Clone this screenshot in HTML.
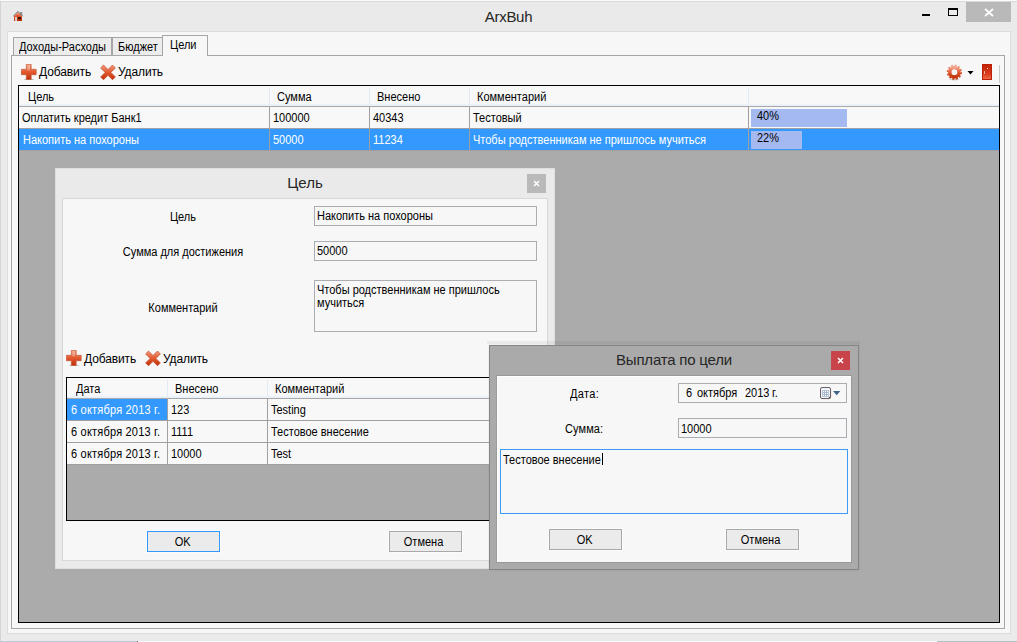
<!DOCTYPE html>
<html lang="ru">
<head>
<meta charset="utf-8">
<title>ArxBuh</title>
<style>
*{box-sizing:border-box;margin:0;padding:0}
html,body{width:1017px;height:642px;overflow:hidden;background:#eaeaea}
body{position:relative;font-family:"Liberation Sans",sans-serif;font-size:12px;color:#000;line-height:14px}
.s{transform:scaleX(.9167);transform-origin:0 50%}
.sc{transform-origin:50% 50%}
.a{position:absolute;white-space:nowrap}
.t12{letter-spacing:-.12px}
.w{color:#fff}
.hl{background:#3399ff}
.vl{position:absolute;width:1px;background:#a0a0a0}
.hlne{position:absolute;height:1px;background:#a0a0a0}
.inp{position:absolute;border:1px solid #abadb3;background:#f7f7f7}
.btn{position:absolute;border:1px solid #a9a9a9;background:#ebebeb;text-align:center;font-size:12px;line-height:19px;padding-top:1px;box-shadow:0 0 0 1px #fbfbfb}
.btn span{display:inline-block;position:relative;left:-1px;transform:scaleX(.9167)}
.btn span.c{left:-2px}
</style>
</head>
<body>
<!-- ===== main window frame ===== -->
<div class="a" id="frame" style="left:0;top:0;width:1017px;height:642px;background:#eaeaea"></div>
<div class="a" style="left:0;top:0;width:1017px;height:1px;background:#fafafa"></div>
<div class="a" style="left:0;top:1px;width:1017px;height:1px;background:#dadada"></div>
<div class="a" style="left:0;top:1px;width:1px;height:640px;background:#d4d4d4"></div>
<div class="a" style="left:0;top:641px;width:137px;height:1px;background:#b9c9d6"></div>
<div class="a" style="left:137px;top:641px;width:800px;height:1px;background:#fbfbfb"></div>
<div class="a" style="left:137px;top:641px;width:1px;height:1px;background:#666"></div>
<div class="a" style="left:937px;top:641px;width:80px;height:1px;background:#b4c0c8"></div>

<!-- app icon -->
<svg class="a" style="left:12px;top:10px" width="12" height="12" viewBox="0 0 12 12">
<defs><linearGradient id="gh" x1="0" y1="0" x2="0" y2="1"><stop offset="0" stop-color="#f6a288"/><stop offset="0.45" stop-color="#e4582e"/><stop offset="1" stop-color="#c8380e"/></linearGradient></defs>
<rect x="8.2" y="2" width="2" height="3" fill="#8a8a8a"/>
<path d="M6 2 L10 6 L10 11 L2 11 L2 6 Z" fill="url(#gh)"/>
<path d="M1.2 6.2 L6 1.4 L10.8 6.2" fill="none" stroke="#687078" stroke-width="1"/>
<rect x="3.2" y="7" width="1.6" height="4" fill="#d8ecf2"/>
<rect x="5.8" y="7" width="3.4" height="2.2" fill="#3a160c"/>
<rect x="5.6" y="9.2" width="3.8" height="1.8" fill="#b02a0a"/>
</svg>
<div class="a" id="title" style="left:0;top:8px;width:1017px;text-align:center;font-size:15px;line-height:18px;color:#262626;letter-spacing:-.3px">ArxBuh</div>

<!-- caption buttons -->
<div class="a" style="left:922px;top:14px;width:8px;height:2px;background:#000"></div>
<div class="a" style="left:948px;top:8px;width:10px;height:8px;border:1px solid #000;border-top-width:2px"></div>
<div class="a" style="left:966px;top:2px;width:45px;height:20px;background:#b9b9b9"></div>
<svg class="a" style="left:984px;top:8px" width="10" height="9" viewBox="0 0 10 9"><path d="M1 1 L9 8 M9 1 L1 8" stroke="#fff" stroke-width="1.7" fill="none"/></svg>

<!-- client area -->
<div class="a" id="client" style="left:7px;top:31px;width:1004px;height:603px;background:#f7f7f7;border:1px solid #dcdcdc"></div>

<!-- tab page -->
<div class="a" id="page" style="left:11px;top:55px;width:994px;height:574px;background:#f7f7f7;border:1px solid #a6a6a6"></div>
<!-- tabs -->
<div class="a" style="left:13px;top:37px;width:99px;height:19px;background:#ececec;border:1px solid #a6a6a6"></div>
<div class="a" style="left:112px;top:37px;width:51px;height:19px;background:#ececec;border:1px solid #a6a6a6"></div>
<div class="a" style="left:162px;top:35px;width:46px;height:21px;background:#f7f7f7;border:1px solid #a6a6a6;border-bottom:none"></div>
<div class="a s" id="tab1" style="left:19px;top:40px">Доходы-Расходы</div>
<div class="a s" id="tab2" style="left:118px;top:40px">Бюджет</div>
<div class="a s" id="tab3" style="left:170px;top:38px">Цели</div>

<!-- toolbar -->
<svg class="a" style="left:21px;top:64px" width="16" height="16" viewBox="0 0 16 16">
<defs><linearGradient id="gp" x1="0" y1="0" x2="0" y2="1"><stop offset="0" stop-color="#f39a7c"/><stop offset="0.5" stop-color="#e25a30"/><stop offset="1" stop-color="#c22e06"/></linearGradient></defs>
<ellipse cx="8" cy="15.6" rx="5" ry="0.9" fill="#555" opacity=".35"/><path d="M5.3 0.3 H10.2 V5.3 H15.2 V10.7 H10.2 V15.4 H5.3 V10.7 H0.3 V5.3 H5.3 Z" fill="url(#gp)" stroke="#c2522e" stroke-width=".6"/><path d="M6.4 1.2 H9 V6.3 H6.4 Z" fill="#fff" opacity=".3"/>
</svg>
<div class="a t12" id="add1" style="left:39px;top:65px">Добавить</div>
<svg class="a" style="left:100px;top:64px" width="16" height="16" viewBox="0 0 16 16">
<path d="M3.5 1 L8 5.5 L12.5 1 L15.4 3.9 L10.9 8.4 L15.4 12.9 L12.5 15.8 L8 11.3 L3.5 15.8 L0.6 12.9 L5.1 8.4 L0.6 3.9 Z" fill="url(#gp)" stroke="#b8401c" stroke-width=".6"/>
</svg>
<div class="a t12" id="del1" style="left:118px;top:65px">Удалить</div>

<!-- gear -->
<svg class="a" style="left:946px;top:64px" width="17" height="17" viewBox="0 0 17 17">
<defs><linearGradient id="gg" x1="0" y1="0" x2="0" y2="1"><stop offset="0" stop-color="#f2a48a"/><stop offset="0.5" stop-color="#df5a34"/><stop offset="1" stop-color="#c2380e"/></linearGradient></defs>
<ellipse cx="8.4" cy="15.6" rx="5" ry="0.8" fill="#555" opacity=".25"/>
<circle cx="8.4" cy="8.2" r="4.6" fill="none" stroke="url(#gg)" stroke-width="3.4"/>
<circle cx="8.4" cy="8.2" r="6.7" fill="none" stroke="url(#gg)" stroke-width="1.9" stroke-dasharray="2 1.508"/>
</svg>
<svg class="a" style="left:967px;top:71px" width="7" height="4" viewBox="0 0 7 4"><path d="M0.5 0 H6.5 L3.5 3.5 Z" fill="#000"/></svg>
<div class="a" style="left:982px;top:64px;width:10px;height:16px;background:linear-gradient(#c82408,#d83818 60%,#ee6848);border:1px solid #b82008"></div>
<div class="a" style="left:987px;top:68px;width:1px;height:1px;background:#fff"></div>
<div class="a" style="left:984px;top:71px;width:1px;height:3px;background:#f4b0a0"></div>
<div class="a" style="left:999px;top:65px;width:1px;height:18px;background:#c8c8c8"></div>

<!-- main grid -->
<div class="a" id="grid" style="left:18px;top:85px;width:982px;height:538px;background:#ababab;border:1px solid #000"></div>
<div class="a" style="left:19px;top:86px;width:980px;height:20px;background:linear-gradient(#f8f8f8 0,#f8f8f8 17px,#f1f5fb 18px,#e6eefa 20px)"></div>
<div class="hlne" style="left:19px;top:106px;width:980px;background:#a8a8a8"></div>
<div class="a" style="left:19px;top:107px;width:980px;height:21px;background:#f8f8f8"></div>
<div class="hlne" style="left:19px;top:128px;width:980px"></div>
<div class="a hl" style="left:19px;top:129px;width:980px;height:21px"></div>
<div class="hlne" style="left:19px;top:150px;width:980px"></div>
<!-- header separators -->
<div class="vl" style="left:269px;top:88px;height:17px;background:#e2eaf6"></div>
<div class="vl" style="left:369px;top:88px;height:17px;background:#e2eaf6"></div>
<div class="vl" style="left:469px;top:88px;height:17px;background:#e2eaf6"></div>
<div class="vl" style="left:748px;top:88px;height:17px;background:#e2eaf6"></div>
<!-- cell separators -->
<div class="vl" style="left:269px;top:107px;height:44px"></div>
<div class="vl" style="left:369px;top:107px;height:44px"></div>
<div class="vl" style="left:469px;top:107px;height:44px"></div>
<div class="vl" style="left:748px;top:107px;height:44px"></div>
<!-- header text -->
<div class="a s" id="h1" style="left:28px;top:90px">Цель</div>
<div class="a s" id="h2" style="left:277px;top:90px">Сумма</div>
<div class="a s" id="h3" style="left:377px;top:90px">Внесено</div>
<div class="a s" id="h4" style="left:477px;top:90px">Комментарий</div>
<!-- row1 -->
<div class="a s" id="r1c1" style="left:22px;top:111px">Оплатить кредит Банк1</div>
<div class="a s" id="r1c2" style="left:273px;top:111px">100000</div>
<div class="a s" id="r1c3" style="left:373px;top:111px">40343</div>
<div class="a s" id="r1c4" style="left:473px;top:111px">Тестовый</div>
<div class="a" style="left:751px;top:109px;width:96px;height:18px;background:#a3b9f0"></div>
<div class="a s" id="p1" style="left:757px;top:109px">40%</div>
<!-- row2 -->
<div class="a s w" id="r2c1" style="left:23px;top:133px">Накопить на похороны</div>
<div class="a s w" id="r2c2" style="left:273px;top:133px">50000</div>
<div class="a s w" id="r2c3" style="left:373px;top:133px">11234</div>
<div class="a s w" id="r2c4" style="left:473px;top:133px">Чтобы родственникам не пришлось мучиться</div>
<div class="a" style="left:751px;top:131px;width:51px;height:18px;background:#a3b9f0"></div>
<div class="a s" id="p2" style="left:757px;top:131px">22%</div>

<!-- ===== Goal dialog ===== -->
<div class="a" id="gdlg" style="left:55px;top:168px;width:500px;height:401px;background:#eaeaea;border:1px solid #dedede"></div>
<div class="a" id="gtitle" style="left:55px;top:174px;width:500px;text-align:center;font-size:15px;line-height:18px;color:#262626">Цель</div>
<div class="a" style="left:527px;top:174px;width:19px;height:19px;background:#b9b9b9"></div>
<svg class="a" style="left:533px;top:180px" width="7" height="7" viewBox="0 0 7 7"><path d="M1 1 L6 6 M6 1 L1 6" stroke="#fff" stroke-width="1.5" fill="none"/></svg>
<div class="a" id="gclient" style="left:62px;top:198px;width:486px;height:363px;background:#f7f7f7;border:1px solid #d8d8d8"></div>

<div class="a s sc" id="gl1" style="left:62px;top:210px;width:242px;text-align:center">Цель</div>
<div class="a s sc" id="gl2" style="left:62px;top:245px;width:242px;text-align:center">Сумма для достижения</div>
<div class="a s sc" id="gl3" style="left:62px;top:301px;width:242px;text-align:center">Комментарий</div>
<div class="inp" style="left:314px;top:206px;width:223px;height:20px"></div>
<div class="a s" id="gi1" style="left:317px;top:209px">Накопить на похороны</div>
<div class="inp" style="left:314px;top:241px;width:223px;height:20px"></div>
<div class="a s" id="gi2" style="left:317px;top:244px">50000</div>
<div class="inp" style="left:314px;top:280px;width:223px;height:52px"></div>
<div class="a s" id="gi3" style="left:317px;top:284px;line-height:13px">Чтобы родственникам не пришлось<br>мучиться</div>

<!-- dialog toolbar -->
<svg class="a" style="left:66px;top:350px" width="16" height="16" viewBox="0 0 16 16">
<ellipse cx="8" cy="15.6" rx="5" ry="0.9" fill="#555" opacity=".35"/><path d="M5.3 0.3 H10.2 V5.3 H15.2 V10.7 H10.2 V15.4 H5.3 V10.7 H0.3 V5.3 H5.3 Z" fill="url(#gp)" stroke="#c2522e" stroke-width=".6"/><path d="M6.4 1.2 H9 V6.3 H6.4 Z" fill="#fff" opacity=".3"/>
</svg>
<div class="a t12" id="add2" style="left:84px;top:352px">Добавить</div>
<svg class="a" style="left:145px;top:350px" width="16" height="16" viewBox="0 0 16 16">
<path d="M3.5 1 L8 5.5 L12.5 1 L15.4 3.9 L10.9 8.4 L15.4 12.9 L12.5 15.8 L8 11.3 L3.5 15.8 L0.6 12.9 L5.1 8.4 L0.6 3.9 Z" fill="url(#gp)" stroke="#b8401c" stroke-width=".6"/>
</svg>
<div class="a t12" id="del2" style="left:163px;top:352px">Удалить</div>

<!-- dialog grid -->
<div class="a" id="ggrid" style="left:66px;top:377px;width:478px;height:144px;background:#ababab;border:1px solid #000"></div>
<div class="a" style="left:67px;top:378px;width:476px;height:20px;background:linear-gradient(#f8f8f8 0,#f8f8f8 17px,#f1f5fb 18px,#e6eefa 20px)"></div>
<div class="hlne" style="left:67px;top:398px;width:476px;background:#a8a8a8"></div>
<div class="a" style="left:67px;top:399px;width:476px;height:65px;background:#f8f8f8"></div>
<div class="a hl" style="left:67px;top:399px;width:100px;height:21px"></div>
<div class="hlne" style="left:67px;top:420px;width:476px"></div>
<div class="hlne" style="left:67px;top:442px;width:476px"></div>
<div class="hlne" style="left:67px;top:464px;width:476px"></div>
<div class="vl" style="left:167px;top:380px;height:17px;background:#e2eaf6"></div>
<div class="vl" style="left:267px;top:380px;height:17px;background:#e2eaf6"></div>
<div class="vl" style="left:167px;top:399px;height:66px"></div>
<div class="vl" style="left:267px;top:399px;height:66px"></div>
<div class="a s" id="gh1" style="left:76px;top:382px">Дата</div>
<div class="a s" id="gh2" style="left:175px;top:382px">Внесено</div>
<div class="a s" id="gh3" style="left:275px;top:382px">Комментарий</div>
<div class="a s w" id="g1c1" style="left:71px;top:403px;letter-spacing:.22px">6 октября 2013 г.</div>
<div class="a s" id="g1c2" style="left:171px;top:403px">123</div>
<div class="a s" id="g1c3" style="left:271px;top:403px">Testing</div>
<div class="a s" id="g2c1" style="left:71px;top:425px;letter-spacing:.22px">6 октября 2013 г.</div>
<div class="a s" id="g2c2" style="left:171px;top:425px">1111</div>
<div class="a s" id="g2c3" style="left:271px;top:425px">Тестовое внесение</div>
<div class="a s" id="g3c1" style="left:71px;top:447px;letter-spacing:.22px">6 октября 2013 г.</div>
<div class="a s" id="g3c2" style="left:171px;top:447px">10000</div>
<div class="a s" id="g3c3" style="left:271px;top:447px">Test</div>

<div class="btn" id="gok" style="left:147px;top:531px;width:73px;height:21px;border-color:#3399ff"><span>OK</span></div>
<div class="btn" id="gcancel" style="left:389px;top:531px;width:73px;height:21px"><span class="c">Отмена</span></div>

<!-- ===== Payout dialog ===== -->
<div class="a" id="pdlg" style="left:489px;top:345px;width:370px;height:225px;background:#aaaaaa;border:1px solid #858585;box-shadow:0 0 2px rgba(0,0,0,.10)"></div>
<div class="a" style="left:487px;top:341px;width:373px;height:3px;background:rgba(0,0,0,.05)"></div>
<div class="a" id="ptitle" style="left:489px;top:351px;width:370px;text-align:center;font-size:15px;line-height:18px;color:#262626;letter-spacing:-.2px">Выплата по цели</div>
<div class="a" style="left:831px;top:351px;width:19px;height:19px;background:#c9444a"></div>
<svg class="a" style="left:837px;top:357px" width="7" height="7" viewBox="0 0 7 7"><path d="M1 1 L6 6 M6 1 L1 6" stroke="#fff" stroke-width="1.5" fill="none"/></svg>
<div class="a" id="pclient" style="left:496px;top:375px;width:356px;height:188px;background:#f7f7f7;border:1px solid #9a9a9a;box-shadow:inset 1px 1px 0 #fff"></div>

<div class="a s" id="pl1" style="left:570px;top:387px;letter-spacing:.4px">Дата:</div>
<div class="a s" id="pl2" style="left:565px;top:422px;letter-spacing:.1px">Сумма:</div>
<div class="inp" style="left:678px;top:383px;width:169px;height:20px"></div>
<div class="a s" id="pi1" style="left:686px;top:386px">6</div><div class="a s" style="left:697px;top:386px">октября</div><div class="a s" style="left:745px;top:386px">2013</div><div class="a s" style="left:772px;top:386px">г.</div>
<!-- calendar icon -->
<svg class="a" style="left:820px;top:387px" width="12" height="13" viewBox="0 0 12 13">
<rect x="1.2" y="1.2" width="10" height="11" rx="1.5" fill="#999" opacity=".35"/>
<rect x="0.5" y="0.5" width="10" height="11" rx="1.5" fill="#eef4fd" stroke="#6d6061" stroke-width="1"/>
<rect x="2.2" y="3.2" width="6.6" height="6.6" fill="#a9b8cd"/>
<g fill="#fff"><rect x="3" y="4" width="1" height="1"/><rect x="5" y="4" width="1" height="1"/><rect x="7" y="4" width="1" height="1"/><rect x="3" y="6" width="1" height="1"/><rect x="5" y="6" width="1" height="1"/><rect x="7" y="6" width="1" height="1"/><rect x="3" y="8" width="1" height="1"/><rect x="5" y="8" width="1" height="1"/><rect x="7" y="8" width="1" height="1"/></g>
<path d="M8.4 11 L10 9.4 L10 11 Z" fill="#4a4040"/>
</svg>
<svg class="a" style="left:833px;top:391px" width="8" height="5" viewBox="0 0 8 5"><path d="M0 0 H7.4 L3.7 4.2 Z" fill="#3f6589"/></svg>
<div class="inp" style="left:678px;top:418px;width:169px;height:20px"></div>
<div class="a s" id="pi2" style="left:681px;top:422px">10000</div>
<div class="a" style="left:500px;top:449px;width:348px;height:65px;background:#f7f7f7;border:1px solid #3d9bf4"></div>
<div class="a s" id="pi3" style="left:503px;top:453px">Тестовое внесение</div>
<div class="a" style="left:602px;top:453px;width:1px;height:12px;background:#000"></div>
<div class="btn" id="pok" style="left:549px;top:529px;width:73px;height:21px"><span>OK</span></div>
<div class="btn" id="pcancel" style="left:726px;top:529px;width:73px;height:21px"><span class="c">Отмена</span></div>
</body>
</html>
